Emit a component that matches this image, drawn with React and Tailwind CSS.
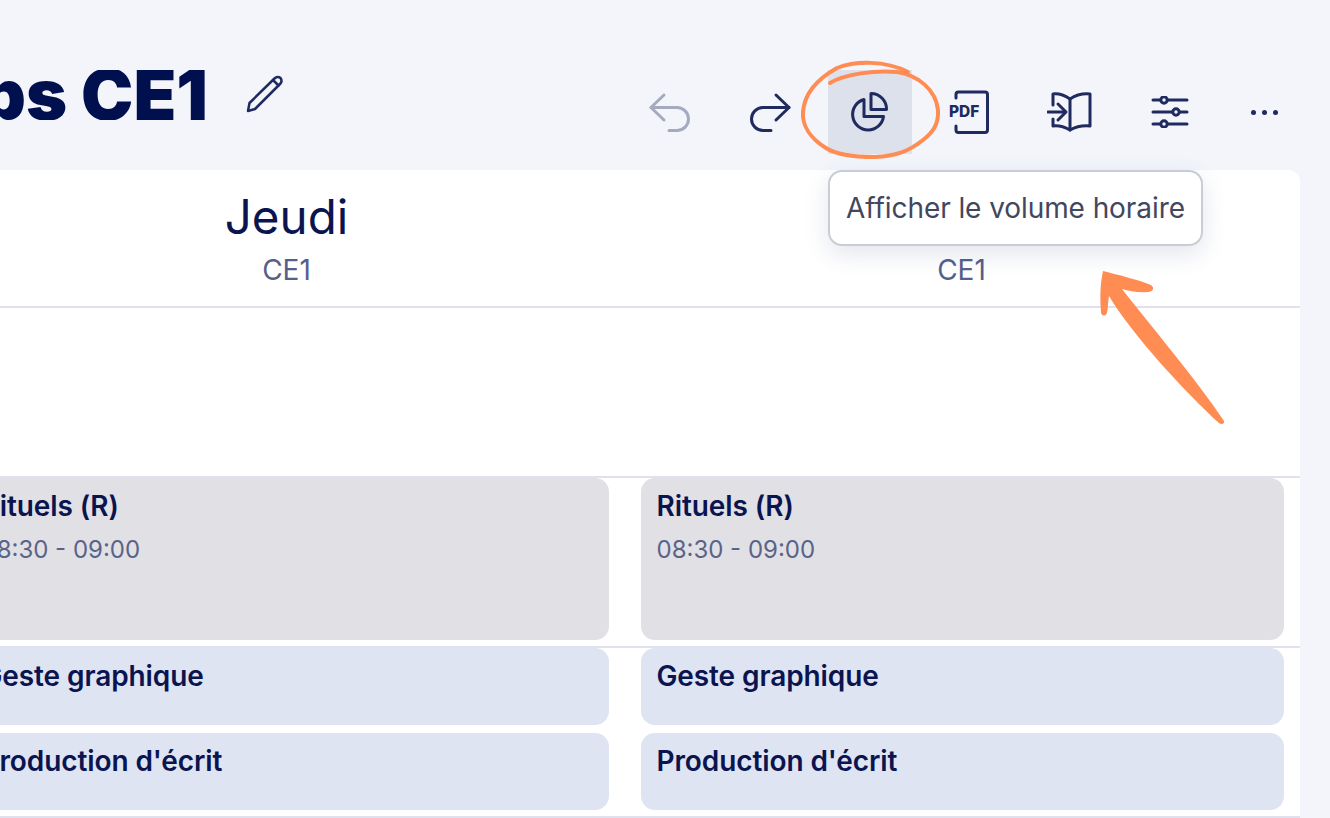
const NAVY = '#1f2a5e';

function Undo({ flip, color }) {
    return (
        <svg width="44" height="44" viewBox="0 0 44 44" fill="none" stroke={color} strokeWidth="3" strokeLinecap="round" strokeLinejoin="round" className={`mt-[2px] ${flip ? '-scale-x-100' : ''}`}>
            <path d="M16 4 L3 16.500 L16 29" />
            <path d="M3 16.500 H29 A11.500 11.500 0 0 1 29 39.500 H21" />
        </svg>
    );
}

function PieIcon() {
    return (
        <svg width="44" height="44" viewBox="0 0 44 44" fill="none" stroke={NAVY} strokeWidth="3" strokeLinecap="round" strokeLinejoin="round" className="-ml-[4px]">
            <path d="M18 9.500 A15.500 15.500 0 1 0 37.500 26.500 H18 Z" />
            <path d="M25 3.500 A15.500 15.500 0 0 1 40.500 19.500 H25 Z" />
        </svg>
    );
}

function PdfIcon() {
    return (
        <svg width="44" height="46" viewBox="0 0 44 46" fill="none">
            <path d="M8 9 V5.500 Q8 3 10.500 3 H37 Q39.500 3 39.500 5.500 V41 Q39.500 43.500 37 43.500 H10.500 Q8 43.500 8 41 V37" stroke={NAVY} strokeWidth="3" strokeLinecap="round" />
            <text x="1" y="28" fill={NAVY} fontFamily="Inter, sans-serif" fontWeight="800" fontSize="15.500">PDF</text>
        </svg>
    );
}

function BookIcon() {
    return (
        <svg width="46" height="42" viewBox="0 0 46 42" fill="none" stroke={NAVY} strokeWidth="3" strokeLinecap="round" strokeLinejoin="round">
            <path d="M6 14 V3 Q14 2 23 8 Q32 2 43 3 V35 Q32 34 23 39 Q14 34 6 35 V28" />
            <path d="M23 8 V39" />
            <path d="M1 21 H18" />
            <path d="M11 13 L19 21 L11 29" />
        </svg>
    );
}

function SlidersIcon() {
    return (
        <svg width="38" height="32" viewBox="0 0 38 32" fill="none" stroke={NAVY} strokeWidth="3" strokeLinecap="round">
            <path d="M2 4 H9 M17 4 H36" />
            <circle cx="13" cy="4" r="3.200" />
            <path d="M2 16 H21 M29 16 H36" />
            <circle cx="25" cy="16" r="3.200" />
            <path d="M2 28 H9 M17 28 H36" />
            <circle cx="13" cy="28" r="3.200" />
        </svg>
    );
}

function Card({ title, time, gray, height }) {
    return (
        <div className={`rounded-[14px] px-[15.5px] pt-[10px] ${height} ${gray ? 'bg-[#e1e0e5]' : 'bg-[#dfe4f2]'}`}>
            <div className="text-[28px] leading-[36px] font-semibold tracking-[-0.1px] text-[#0a1550] whitespace-nowrap">{title}</div>
            {time && <div className="text-[24px] leading-[36px] mt-[8px] text-[#5a6389] whitespace-nowrap">{time}</div>}
        </div>
    );
}

function Row({ left, right, className }) {
    return (
        <div className={`grid grid-cols-2 border-b-2 border-[#dfe2ee] ${className}`}>
            <div className="flex flex-col gap-2 px-4">{left}</div>
            <div className="flex flex-col gap-2 px-4">{right}</div>
        </div>
    );
}

function DayColumn({ name }) {
    return (
        <div className="flex flex-col items-center pt-[19px] pr-[2px]">
            <div className="text-[47.5px] leading-[56px] text-[#0a1550]">{name}</div>
            <div className="text-[28px] leading-[36px] mt-[7px] text-[#565f8a]">CE1</div>
        </div>
    );
}

function LessonCards() {
    return (
        <>
            <Card title="Geste graphique" height="h-[77px]" />
            <Card title="Production d'écrit" height="h-[77px]" />
        </>
    );
}

export default function App() {
    return (
        <div className="relative w-[1330px] h-[818px] overflow-hidden bg-[#f3f5fb] font-['Inter',sans-serif]">
            <header className="flex items-start h-[170px] pt-[70px]">
                <div className="flex-none w-[211px] overflow-hidden flex justify-end">
                    <h1 className="text-[70px] leading-[50px] pr-[3px] font-black text-[#00104f] whitespace-nowrap">Emploi du temps CE1</h1>
                </div>
                <button className="ml-[34px] mt-[3px] flex-none">
                    <svg width="42" height="42" viewBox="0 0 42 42" fill="none" stroke={NAVY} strokeWidth="2.500" strokeLinejoin="round" strokeLinecap="round">
                        <path d="M3 38 L4.500 30 L30 5 Q33 3 35.500 5 Q37.500 8 35.500 10.500 L10 36 Z" />
                        <path d="M28 7 L33.500 12.500" />
                    </svg>
                </button>
                <div className="flex gap-4 ml-[341px] flex-none">
                    <button className="w-[84px] h-[84px] flex items-center justify-center"><Undo color="#a5aac0" /></button>
                    <button className="w-[84px] h-[84px] flex items-center justify-center"><Undo flip color={NAVY} /></button>
                    <button className="w-[84px] h-[84px] flex items-center justify-center bg-[#dde1ec]"><PieIcon /></button>
                    <button className="w-[84px] h-[84px] flex items-center justify-center"><PdfIcon /></button>
                    <button className="w-[84px] h-[84px] flex items-center justify-center"><BookIcon /></button>
                    <button className="w-[84px] h-[84px] flex items-center justify-center"><SlidersIcon /></button>
                    <button className="w-[72px] h-[84px] flex items-center justify-center gap-[6px]">
                        <span className="w-[5px] h-[5px] rounded-full bg-[#1f2a5e]" />
                        <span className="w-[5px] h-[5px] rounded-full bg-[#1f2a5e]" />
                        <span className="w-[5px] h-[5px] rounded-full bg-[#1f2a5e]" />
                    </button>
                </div>
            </header>

            <main className="w-[1350px] -ml-[50px] bg-white rounded-tr-[12px] h-[648px]">
                <div className="grid grid-cols-2 h-[138px] border-b-2 border-[#dfe2ee]">
                    <DayColumn name="Jeudi" />
                    <DayColumn name="Vendredi" />
                </div>
                <div className="h-[170px] border-b-2 border-[#dfe2ee]" />
                <Row
                    className="h-[170px]"
                    left={<Card gray title="Rituels (R)" time="08:30 - 09:00" height="h-[162px]" />}
                    right={<Card gray title="Rituels (R)" time="08:30 - 09:00" height="h-[162px]" />}
                />
                <Row className="h-[170px]" left={<LessonCards />} right={<LessonCards />} />
            </main>

            <div className="absolute left-[828px] top-[170px] w-[375px] h-[76px] rounded-[14px] border-2 border-[#c9ccd8] bg-white shadow-[0_8px_24px_rgba(60,70,120,0.14)] flex items-center justify-center text-[28px] tracking-[-0.08px] text-[#42475e] whitespace-nowrap">
                Afficher le volume horaire
            </div>

            <svg className="absolute inset-0 pointer-events-none" width="1330" height="818" viewBox="0 0 1330 818" fill="none">
                <path d="M830 83 C845 74 875 70 897 72 C918 75 936 90 938 110 C939 125 932 133 923 140 C908 152 895 156 875 157 C852 157 835 154 826 148 C810 138 802 125 803 112 C804 98 812 82 837 68 C855 61 885 60 908 72" stroke="#ff8c52" strokeWidth="4" strokeLinecap="round" />
                <path d="M1103 271 C1118 275 1140 280 1151 285 C1155 288 1153 292 1148 292 C1138 293 1130 291 1122 289 C1150 325 1197 380 1224 421 C1225 424 1221 425 1219 423 C1188 395 1132 335 1109 296 C1108 302 1108 309 1107 313 C1105 317 1101 316 1101 312 C1100 298 1100 285 1103 271 Z" fill="#ff8c52" />
            </svg>
        </div>
    );
}
